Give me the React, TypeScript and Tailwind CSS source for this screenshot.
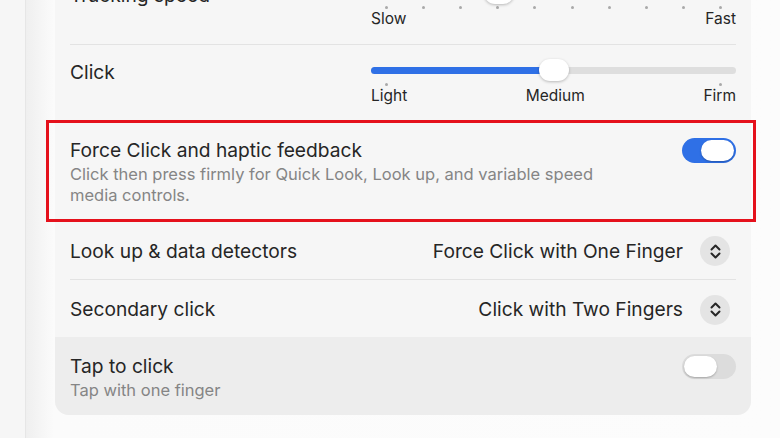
import React from 'react';

const font = { fontFamily: 'Inter, "Noto Sans", sans-serif' };

const Toggle: React.FC<{ on: boolean }> = ({ on }) => (
  <div
    className={`flex h-[25px] w-[54px] shrink-0 items-center rounded-full p-[2px] ${
      on ? 'justify-end bg-[#2f70e6]' : 'justify-start bg-[#dcdcdc]'
    }`}
  >
    <div className="h-[21px] w-[33px] rounded-full bg-white shadow-[0_1px_2px_rgba(0,0,0,0.25)]" />
  </div>
);

const Dots: React.FC<{ count: number }> = ({ count }) => (
  <div className="flex justify-between px-[14px]">
    {Array.from({ length: count }).map((_, i) => (
      <span key={i} className="h-[3px] w-[3px] rounded-full bg-[#a9a9a9]" />
    ))}
  </div>
);

const Slider: React.FC<{ pct: number; dots: number; labels: string[]; fill: boolean }> = ({
  pct,
  dots,
  labels,
  fill,
}) => (
  <div className="w-[365px] shrink-0">
    <div className="relative h-[22px]">
      <div className="absolute left-0 right-0 top-[8px] h-[7px] rounded-full bg-[#dedede]" />
      {fill && (
        <div
          className="absolute left-0 top-[8px] h-[7px] rounded-full bg-[#2f70e6]"
          style={{ width: `${pct}%` }}
        />
      )}
      <div
        className="absolute top-0 h-[22px] w-[30px] -translate-x-1/2 rounded-full bg-white shadow-[0_1px_3px_rgba(0,0,0,0.25)]"
        style={{ left: `${pct}%` }}
      />
    </div>
    <div className="mt-[2px]">
      <Dots count={dots} />
    </div>
    <div className="flex justify-between text-[15.5px] leading-[20px] text-[#262626]">
      {labels.map((l) => (
        <span key={l}>{l}</span>
      ))}
    </div>
  </div>
);

const Stepper: React.FC = () => (
  <div className="flex h-[30px] w-[30px] items-center justify-center rounded-full bg-[#e4e4e4]">
    <svg width="13" height="17" viewBox="0 0 13 17" fill="none" stroke="#262626" strokeWidth="2" strokeLinecap="round" strokeLinejoin="round">
      <path d="M2.5 6.5 L6.5 2.5 L10.5 6.5" />
      <path d="M2.5 10.5 L6.5 14.5 L10.5 10.5" />
    </svg>
  </div>
);

const Divider = () => <div className="mx-[15px] h-px bg-[#e3e3e3]" />;

export default function App() {
  return (
    <div className="flex h-[438px] w-[780px] overflow-hidden bg-[#fcfcfc] text-[#262626]" style={font}>
      <div className="w-[26px] shrink-0 border-r border-[#e6e6e6] bg-[#f6f6f6]" />
      <div className="flex-1 bg-[linear-gradient(to_right,#efefef,#fbfbfb_28px,#fcfcfc)] pl-[29px] pr-[29px]">
        <div className="-mt-[32px] rounded-b-[14px] bg-[#f6f6f6]">
          <div className="flex h-[76px] items-start px-[15px] pt-[15px]">
            <div className="flex-1 text-[19.2px] leading-[24px]">Tracking speed</div>
            <div className="-mt-[1px]">
              <Slider pct={35} dots={10} labels={['Slow', 'Fast']} fill={false} />
            </div>
          </div>
          <Divider />
          <div className="flex h-[76px] items-start px-[15px] pt-[15px]">
            <div className="flex-1 text-[19.2px] leading-[24px]">Click</div>
            <div className="-mt-[1px]">
              <Slider pct={50} dots={2} labels={['Light', 'Medium', 'Firm']} fill={true} />
            </div>
          </div>
          <div className="relative flex h-[100px] items-start px-[15px] pt-[17px]">
            <div className="flex-1">
              <div className="text-[19.2px] leading-[24px]">Force Click and haptic feedback</div>
              <div className="mt-[2px] w-[548px] text-[16.5px] leading-[21px] text-[#858585]">
                Click then press firmly for Quick Look, Look up, and variable speed media controls.
              </div>
            </div>
            <Toggle on={true} />
            <div className="pointer-events-none absolute -left-[9px] -right-[5px] -top-[1px] bottom-[-1px] border-[3px] border-[#e5111c]" />
          </div>
          <div className="flex h-[58px] items-center pl-[15px] pr-[21px] pt-[2px]">
            <div className="flex-1 text-[19.2px]">Look up &amp; data detectors</div>
            <span className="mr-[17px] text-[19.2px]">Force Click with One Finger</span>
            <Stepper />
          </div>
          <Divider />
          <div className="flex h-[57px] items-center pl-[15px] pr-[21px] pt-[2px]">
            <div className="flex-1 text-[19.2px]">Secondary click</div>
            <span className="mr-[17px] text-[19.2px]">Click with Two Fingers</span>
            <Stepper />
          </div>
          <div className="flex h-[78px] items-start rounded-b-[14px] bg-[#ededed] px-[15px] pt-[17px]">
            <div className="flex-1">
              <div className="text-[19.2px] leading-[24px]">Tap to click</div>
              <div className="mt-[2px] text-[16.5px] leading-[21px] text-[#858585]">Tap with one finger</div>
            </div>
            <Toggle on={false} />
          </div>
        </div>
      </div>
    </div>
  );
}
